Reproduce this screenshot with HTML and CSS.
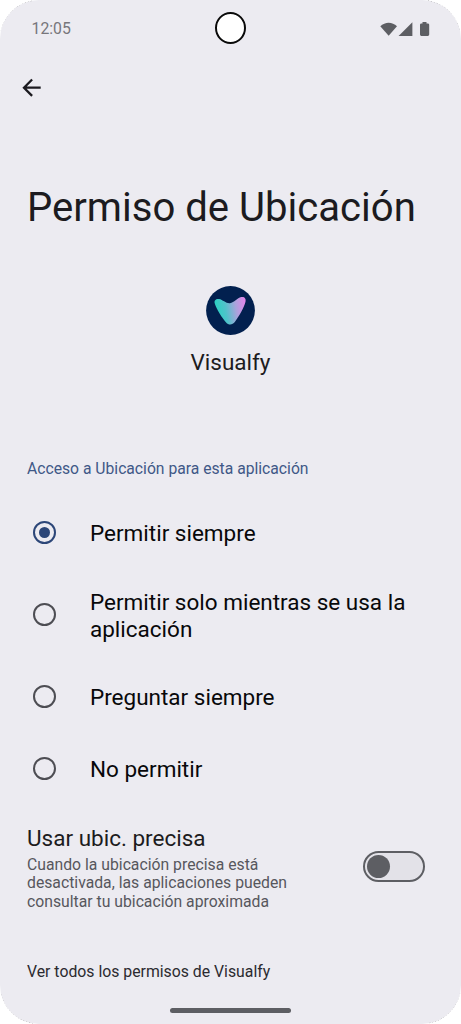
FILE: index.html
```html
<!DOCTYPE html>
<html lang="es">
<head>
<meta charset="utf-8">
<title>Permiso de Ubicación</title>
<link rel="stylesheet" href="styles.css">
</head>
<body>
<div class="phone">
  <header class="status-bar">
    <span class="clock">12:05</span>
    <svg class="status-icons" width="52" height="18" viewBox="0 0 52 18">
      <path d="M.3 5.2C5 .5 12.3.5 17 5.2L8.65 14.7Z"/>
      <path d="M32.4 1.2V15H18.6Z"/>
      <path d="M42.5 1h4v1.4h1.3q1.4 0 1.4 1.4v9.8q0 1.4-1.4 1.4h-6.4q-1.4 0-1.4-1.4V3.8q0-1.4 1.4-1.4h1.1Z"/>
    </svg>
    <span class="camera"></span>
  </header>
  <nav class="toolbar">
    <svg width="20" height="20" viewBox="0 0 20 20"><path d="M18.7 9.7H2.3M10.1 1.5L2 9.7L10.1 17.9"/></svg>
  </nav>
  <h1 class="title">Permiso de Ubicación</h1>
  <section class="app">
    <svg class="app-logo" width="50" height="50" viewBox="0 0 50 50">
      <defs><linearGradient id="brand" x1="10" y1="22" x2="40" y2="17" gradientUnits="userSpaceOnUse">
        <stop offset="0" stop-color="#2ecfc3"/><stop offset=".3" stop-color="#4fc3ca"/><stop offset=".65" stop-color="#a9a3dc"/><stop offset="1" stop-color="#e584ea"/>
      </linearGradient></defs>
      <circle cx="24.5" cy="24.5" r="24.4" fill="#02204f"/>
      <path fill="url(#brand)" d="M13.2 13C16.7 13.7 20.2 17.7 24 17.2C28.2 16.8 31.2 12 35.2 11.1C38.6 10.5 40.2 12.8 39.5 15.7C38.2 21.5 32.8 30.4 28.8 36.1C26.5 39.2 22.5 39.4 20.1 36.5C16.5 32.3 10.2 23 8.7 17.2C7.9 14.1 10.2 12.4 13.2 13Z"/>
    </svg>
    <p class="app-name">Visualfy</p>
  </section>
  <h2 class="section-label">Acceso a Ubicación para esta aplicación</h2>
  <ul class="options">
    <li class="option"><span class="radio radio-checked"></span><span>Permitir siempre</span></li>
    <li class="option option-tall"><span class="radio"></span><span>Permitir solo mientras se usa la<br>aplicación</span></li>
    <li class="option option-ask"><span class="radio"></span><span>Preguntar siempre</span></li>
    <li class="option"><span class="radio"></span><span>No permitir</span></li>
  </ul>
  <section class="precise">
    <div>
      <h3 class="precise-title">Usar ubic. precisa</h3>
      <p class="precise-text">Cuando la ubicación precisa está<br>desactivada, las aplicaciones pueden<br>consultar tu ubicación aproximada</p>
    </div>
    <span class="switch"><span class="knob"></span></span>
  </section>
  <p class="all-permissions">Ver todos los permisos de Visualfy</p>
  <footer class="gesture"><span class="gesture-bar"></span></footer>
  <svg class="screen-edge" width="461" height="1024" viewBox="0 0 461 1024">
    <path d="M.4 31A39 39 0 0 1 33 .4M428 .4A39 39 0 0 1 460.6 31M460.6 993A39 39 0 0 1 428 1023.6M33 1023.6A39 39 0 0 1 .4 993"/>
  </svg>
</div>
</body>
</html>
```
FILE: styles.css
```css
* { box-sizing: border-box; margin: 0; padding: 0; }
body { background: #fff; font-family: Roboto, sans-serif; color: #1c1b20; }
h1, h2, h3 { font-weight: 400; }
.phone { position: relative; display: flex; flex-direction: column; width: 461px; height: 1024px; overflow: hidden; border-radius: 39px; background: #ecebf1; }
.status-bar { position: relative; display: flex; justify-content: space-between; align-items: center; height: 56px; padding: 0 29px 0 31.5px; }
.clock { font-size: 15.8px; color: #77767b; }
.status-icons { fill: #5d5e63; margin-top: 3px; }
.camera { position: absolute; left: 215px; top: 12px; width: 31px; height: 32px; border: 2px solid #0a0a0a; border-radius: 50%; background: #fff; }
.toolbar { display: flex; height: 63px; padding: 22px 0 0 22px; }
.toolbar path { fill: none; stroke: #1c1b20; stroke-width: 2.3; }
.title { height: 167px; padding: 64px 0 0 27px; font-size: 40.1px; line-height: 50px; white-space: nowrap; }
.app { display: flex; flex-direction: column; align-items: center; height: 162px; }
.app-name { margin-top: 13px; font-size: 22.5px; line-height: 27px; }
.section-label { height: 49px; padding: 10px 0 0 27px; font-size: 15.7px; line-height: 20px; margin-top: 1px; color: #405887; }
.options { list-style: none; color: #08080a; font-size: 22.5px; line-height: 26.4px; }
.option { display: flex; align-items: center; height: 71px; padding-left: 33px; gap: 34px; }
.option-tall { height: 93px; }
.option-ask { height: 72px; padding-bottom: 2px; }
.radio { display: flex; align-items: center; justify-content: center; flex: none; width: 23px; height: 23px; margin-bottom: 2px; border: 2.2px solid #4d4d53; border-radius: 50%; }
.radio-checked { border-color: #2c4678; }
.radio-checked::after { content: ""; width: 11px; height: 11px; border-radius: 50%; background: #2c4678; }
.precise { display: flex; justify-content: space-between; padding: 20px 36px 0 27px; height: 157px; }
.precise-title { font-size: 22.5px; line-height: 27px; }
.precise-text { margin-top: 4px; font-size: 15.75px; line-height: 18.3px; color: #57575d; }
.switch { display: flex; align-items: center; width: 62px; height: 31px; margin-top: 26px; padding-left: 2px; border: 2px solid #5d5e63; border-radius: 16px; background: #e3e2e8; }
.knob { width: 23px; height: 23px; border-radius: 50%; background: #5d5e63; }
.all-permissions { padding-left: 27px; font-size: 15.8px; line-height: 20px; color: #2b2a2f; }
.gesture { display: flex; justify-content: center; margin-top: auto; height: 16px; }
.gesture-bar { width: 121px; height: 5px; border-radius: 3px; background: #5d5e63; }
.screen-edge { position: absolute; left: 0; top: 0; pointer-events: none; }
.screen-edge path { fill: none; stroke: #555; stroke-width: .8; stroke-dasharray: 1 2; }
```
